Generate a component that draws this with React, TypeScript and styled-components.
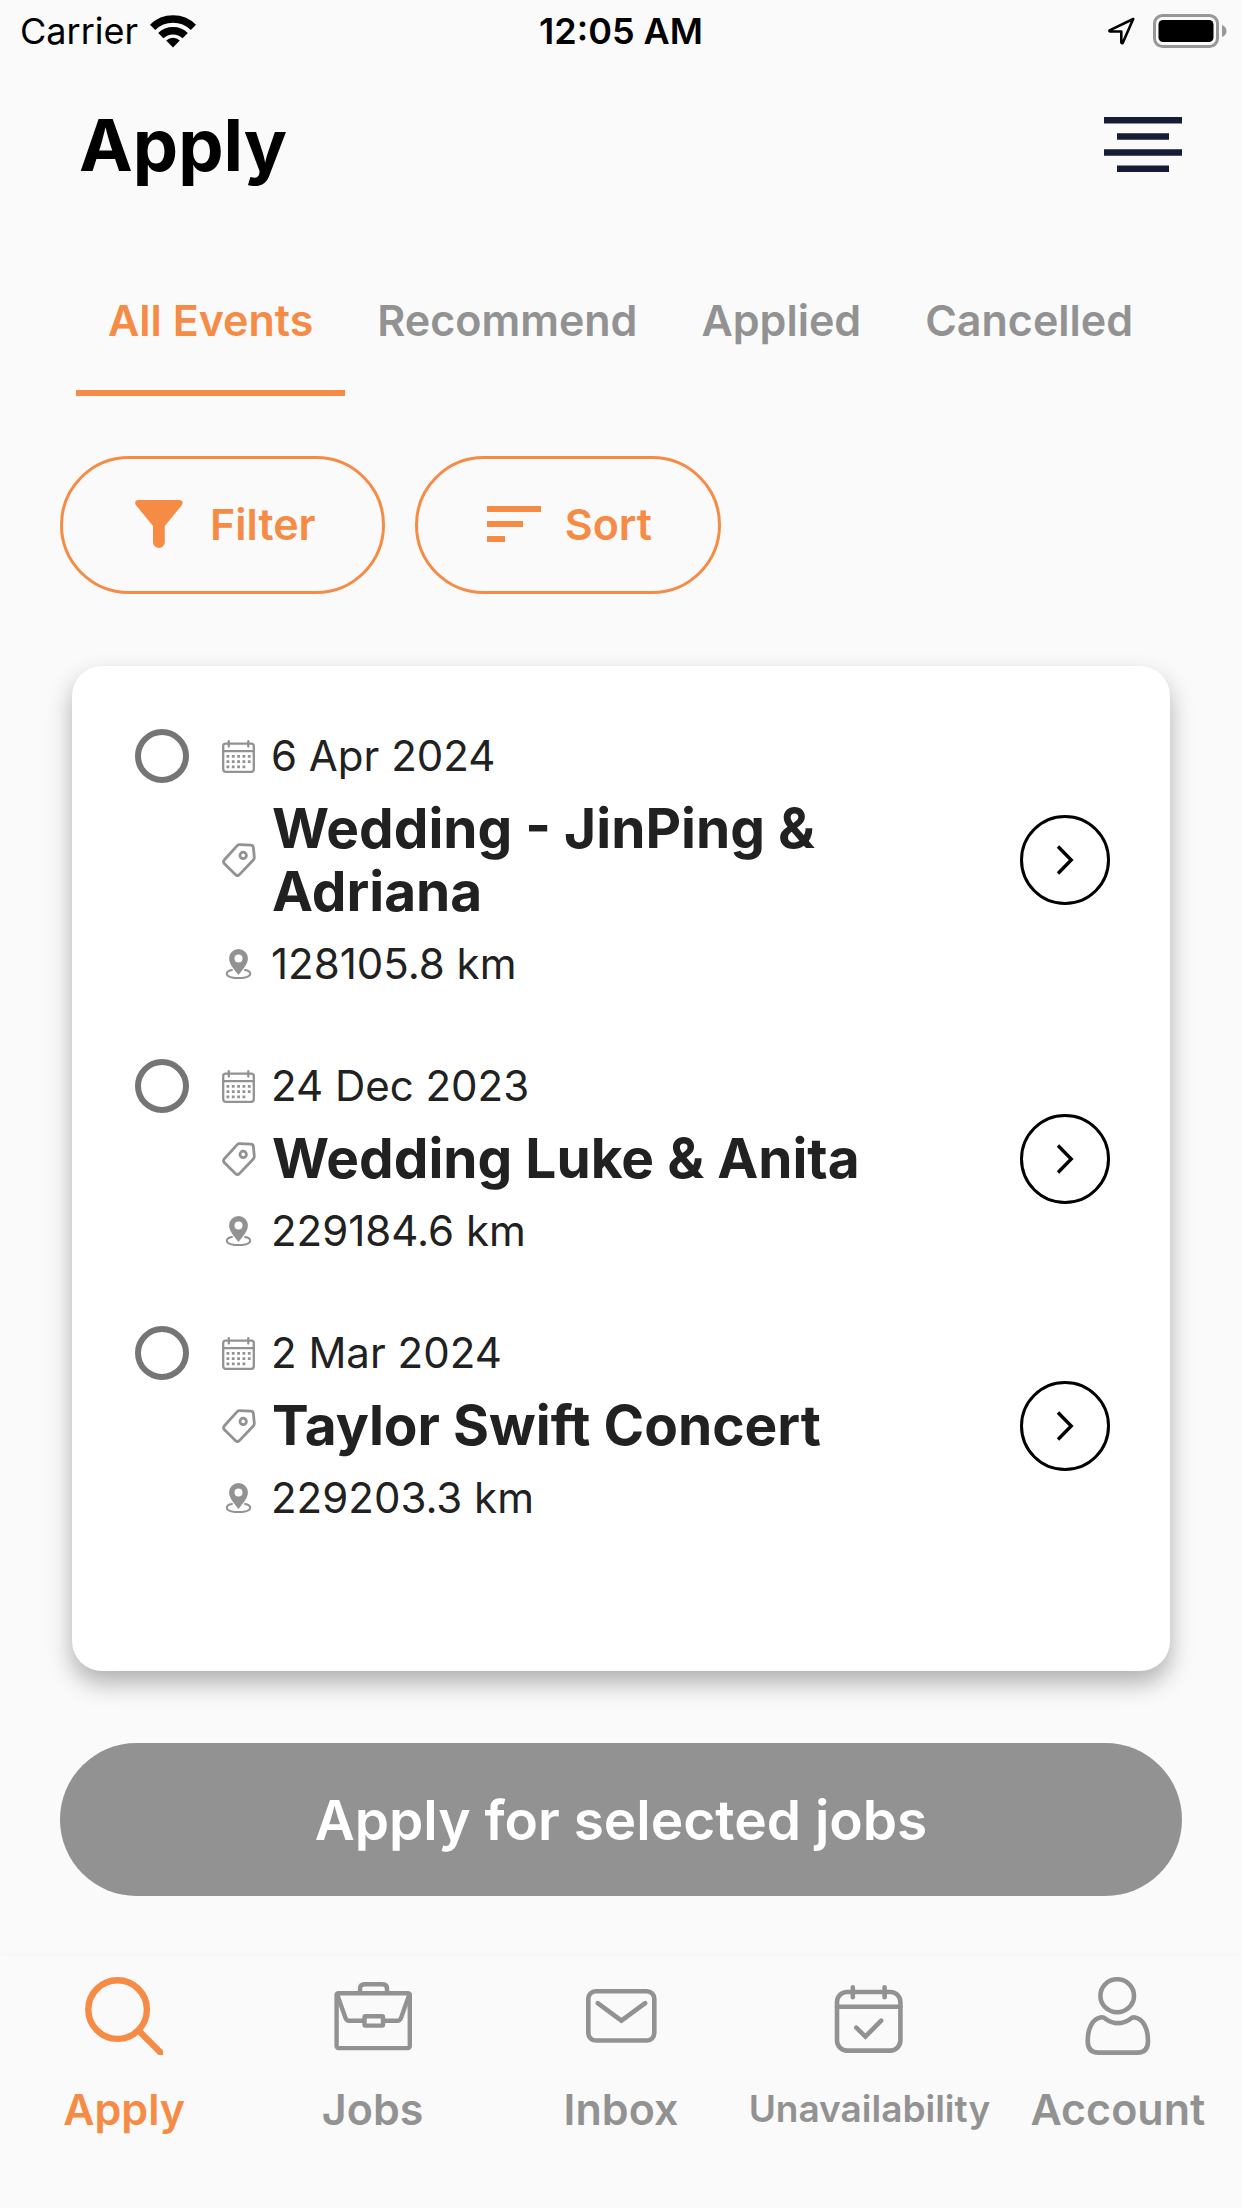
import React, { useState } from "react";
import styled, { createGlobalStyle } from "styled-components";

const color = {
  background: "#fafafa",
  accent: "#f68b45",
  muted: "#929292",
  text: "#212121",
  radio: "#757575",
  menu: "#161c35",
};

const GlobalStyle = createGlobalStyle`
  *, *::before, *::after { box-sizing: border-box; }
  body {
    margin: 0;
    background: ${color.background};
    color: ${color.text};
    font-family: Inter, "Liberation Sans", sans-serif;
  }
  button { font: inherit; color: inherit; background: none; border: 0; padding: 0; cursor: pointer; }
  svg { display: block; flex: none; }
`;

const Screen = styled.div`
  display: flex;
  flex-direction: column;
  min-height: 100vh;
`;

const StatusBar = styled.div`
  display: grid;
  grid-template-columns: 1fr auto 1fr;
  align-items: center;
  height: 62px;
  padding: 0 15px;
  color: #000;
  font-size: 36px;
`;

const StatusGroup = styled.div<{ $end?: boolean }>`
  display: flex;
  align-items: center;
  justify-content: ${(p) => (p.$end ? "flex-end" : "flex-start")};
  gap: ${(p) => (p.$end ? 18 : 12)}px;
  padding-left: 5px;
`;

const Clock = styled.time`
  font-weight: 600;
`;

const Header = styled.header`
  display: flex;
  align-items: center;
  justify-content: space-between;
  height: 166px;
  padding: 0 60px 0 79px;
`;

const PageTitle = styled.h1`
  margin: 0;
  color: #000;
  font-size: 72px;
  font-weight: 700;
  line-height: 84px;
`;

const Tabs = styled.div`
  display: flex;
  margin: 24px 60px 0 76px;
`;

const Tab = styled.button<{ $active: boolean }>`
  height: 144px;
  padding: 0 32px 3px;
  border-bottom: 6px solid ${(p) => (p.$active ? color.accent : "transparent")};
  color: ${(p) => (p.$active ? color.accent : color.muted)};
  font-size: 43px;
  font-weight: 600;
  white-space: nowrap;
`;

const Tools = styled.div`
  display: flex;
  gap: 30px;
  margin: 60px 60px 72px;
`;

const PillButton = styled.button`
  display: flex;
  align-items: center;
  gap: 24px;
  height: 138px;
  padding: 0 66px 2px 69px;
  border: 3px solid ${color.accent};
  border-radius: 69px;
  color: ${color.accent};
  font-size: 43px;
  font-weight: 600;
`;

const Card = styled.ul`
  flex: 1;
  display: flex;
  flex-direction: column;
  gap: 68px;
  margin: 0 72px;
  padding: 63px 60px 63px 63px;
  border-radius: 30px;
  background: #fff;
  box-shadow: 0 12px 24px rgba(0, 0, 0, 0.3);
  list-style: none;
`;

const EventRow = styled.li`
  display: flex;
  align-items: center;
  gap: 33px;
`;

const SelectBox = styled.input`
  appearance: none;
  align-self: flex-start;
  flex: none;
  width: 54px;
  height: 54px;
  margin: 0;
  border: 6px solid ${color.radio};
  border-radius: 50%;
  cursor: pointer;

  &:checked {
    border-color: ${color.accent};
    background: radial-gradient(${color.accent} 50%, transparent 54%);
  }
`;

const Details = styled.label`
  flex: 1;
  display: grid;
  gap: 14px;
`;

const DetailLine = styled.span`
  display: flex;
  align-items: center;
  gap: 16px;
  color: ${color.text};
  font-size: 42px;
  line-height: 54px;

  svg { color: ${color.muted}; }
`;

const EventName = styled.strong`
  font-size: 55px;
  font-weight: 700;
  line-height: 63px;
`;

const OpenButton = styled.button`
  display: grid;
  place-items: center;
  flex: none;
  width: 90px;
  height: 90px;
  border: 3px solid #000;
  border-radius: 50%;
  color: #000;
`;

const ApplyButton = styled.button`
  height: 153px;
  margin: 72px 60px 60px;
  border-radius: 77px;
  background: ${color.muted};
  color: #fff;
  font-size: 55px;
  font-weight: 600;
`;

const BottomNav = styled.nav`
  display: grid;
  grid-template-columns: repeat(5, minmax(0, 1fr));
  padding: 21px 0 72px;
  background: ${color.background};
  box-shadow: 0 -1px 6px rgba(0, 0, 0, 0.025);
`;

const NavLink = styled.a<{ $active: boolean }>`
  display: flex;
  flex-direction: column;
  align-items: center;
  gap: 27px;
  color: ${(p) => (p.$active ? color.accent : color.muted)};
  text-decoration: none;
`;

const NavLabel = styled.span<{ $small: boolean }>`
  font-size: ${(p) => (p.$small ? 37 : 43)}px;
  font-weight: 600;
  line-height: 54px;
  white-space: nowrap;
`;

const line = { fill: "none", stroke: "currentColor", strokeLinecap: "round", strokeLinejoin: "round" } as const;

const WifiIcon = () => (
  <svg width="46" height="34" viewBox="0 0 46 34" fill="none" stroke="currentColor" strokeWidth="7.5" aria-hidden="true">
    <path d="M2.6 13.4A29 29 0 0 1 43.4 13.4" />
    <path d="M10.8 21.6A17.6 17.6 0 0 1 35.2 21.6" />
    <path d="M23 33.5L16.2 26.4A10 10 0 0 1 29.8 26.4Z" fill="currentColor" stroke="none" />
  </svg>
);

const LocationIcon = () => (
  <svg width="27" height="28" viewBox="0 0 27 28" {...line} strokeWidth="2.6" aria-hidden="true">
    <path d="M25.2 2L1.6 13.4Q1 14.4 2 14.5H13.3V25.2Q13.6 26.6 14.8 25.8Z" />
  </svg>
);

const BatteryIcon = () => (
  <svg width="74" height="34" viewBox="0 0 74 34" aria-hidden="true">
    <rect x="1.5" y="1.5" width="63" height="31" rx="8" fill="none" stroke="#979797" strokeWidth="3" />
    <rect x="5.5" y="6" width="55" height="22" rx="4.5" fill="#000" />
    <path d="M69 11Q73.5 13 73.5 17T69 23Z" fill="#979797" />
  </svg>
);

const MenuIcon = () => (
  <svg width="78" height="56" viewBox="0 0 78 56" fill={color.menu} aria-hidden="true">
    <path d="M0 0H78V6.5H0ZM13 16.3H65V22.8H13ZM0 32.3H78V38.8H0ZM13 48.5H65V55H13Z" />
  </svg>
);

const FilterIcon = () => (
  <svg width="54" height="48" viewBox="0 0 54 48" fill="currentColor" aria-hidden="true">
    <path d="M5.5 0H48.2Q52 1 50 5L32.8 26V42.2A5.9 5.8 0 0 1 21 42.2V26L3.8 5Q1.8 1 5.5 0Z" />
  </svg>
);

const SortIcon = () => (
  <svg width="54" height="36" viewBox="0 0 54 36" fill="currentColor" aria-hidden="true">
    <path d="M0 0H54V6H0ZM0 15H36V21H0ZM0 30H18V36H0Z" />
  </svg>
);

const DateIcon = () => (
  <svg width="33" height="33" viewBox="0 0 33 33" aria-hidden="true">
    <g {...line} strokeWidth="2.3">
      <rect x="1.2" y="3.6" width="30.6" height="28.2" rx="2.5" />
      <path d="M1 11.2H32M6.8 1.2V6.5M26.3 1.2V6.5" />
    </g>
    <g {...line} strokeLinecap="butt" strokeWidth="2.8" strokeDasharray="2.8 2.53">
      <path d="M4.5 16.4H28.7M4.5 21.7H28.7M4.5 26.9H23.3" />
    </g>
  </svg>
);

const TagIcon = () => (
  <svg width="34" height="34" viewBox="0 0 34 34" {...line} strokeWidth="2.8" aria-hidden="true">
    <path d="M17.6 1.6L28.8 2.2Q31.2 2.4 31.4 4.6L32.3 14.2Q32.4 15.8 31.3 17L17.4 31.6Q15.4 33.4 13.4 31.6L2.2 20.6Q.8 18.8 2.2 17L15.2 2.6Q16.2 1.5 17.6 1.6Z" />
    <circle cx="21.2" cy="12.4" r="3.2" />
  </svg>
);

const PlaceIcon = () => (
  <svg width="33" height="33" viewBox="0 0 33 33" aria-hidden="true">
    <path
      fill="currentColor"
      fillRule="evenodd"
      d="M16.5 1A9.4 9.4 0 0 1 25.9 10.4C25.9 16.5 20 22 16.5 27C13 22 7.1 16.5 7.1 10.4A9.4 9.4 0 0 1 16.5 1ZM16.5 6.5A4 4 0 1 0 16.5 14.5A4 4 0 1 0 16.5 6.5Z"
    />
    <path {...line} strokeWidth="2" d="M10 22C3.4 23 3 27.6 9 29.2Q16.5 31 24 29.2C30 27.6 29.6 23 23 22" />
  </svg>
);

const ChevronIcon = () => (
  <svg width="24" height="30" viewBox="0 0 24 30" fill="none" stroke="currentColor" strokeWidth="3.4" aria-hidden="true">
    <path d="M5 1.5L18.2 15L5 28.5" />
  </svg>
);

const NavIcon = ({ children }: { children: React.ReactNode }) => (
  <svg width="78" height="78" viewBox="0 0 78 78" {...line} strokeWidth="4.6" aria-hidden="true">
    {children}
  </svg>
);

const SearchIcon = () => (
  <NavIcon>
    <g strokeWidth="6.4" strokeLinecap="butt">
      <circle cx="32.6" cy="32.6" r="29.3" />
      <path d="M53.5 53.5L80 80" />
    </g>
  </NavIcon>
);

const JobsIcon = () => (
  <NavIcon>
    <g strokeWidth="4.4">
      <rect x="2.6" y="16.3" width="73.2" height="54.8" rx="2" />
      <path d="M26 15V11.8Q26 7.3 30.5 7.3H48.5Q53 7.3 53 11.8V15" />
      <path d="M3 17L11.5 41Q12.5 43.7 15 43.7H29M50 43.7H63.5Q66 43.7 67 41L75.5 17" />
      <rect x="30.5" y="39.2" width="18.5" height="9.4" rx="1" />
    </g>
  </NavIcon>
);

const InboxIcon = () => (
  <NavIcon>
    <rect x="6.3" y="14.3" width="66" height="49.2" rx="7.5" />
    <path strokeLinejoin="miter" d="M15.7 26.1L39.4 43.6L63.2 26.1" />
  </NavIcon>
);

const UnavailabilityIcon = () => (
  <NavIcon>
    <rect x="7" y="15" width="63.4" height="58.6" rx="10" />
    <path strokeLinejoin="miter" d="M7 29.7H70.4M22.8 10.4V20.2M54.6 10.4V20.2M26.3 50.6L35.4 59.6L51.2 43.6" />
  </NavIcon>
);

const AccountIcon = () => (
  <NavIcon>
    <ellipse cx="38.2" cy="18.8" rx="16.8" ry="16.5" />
    <path d="M22.5 40.2C13 41.5 8.7 52 8.7 64Q8.7 75.6 19.5 75.6H58.5Q69 75.6 69 64C69 52 64.5 41.5 55 40.2Q53 40.2 51.5 41.8Q38.8 50.5 26.5 41.8Q24.5 40 22.5 40.2Z" />
  </NavIcon>
);

const tabs = ["All Events", "Recommend", "Applied", "Cancelled"];

const events = [
  { id: "jinping", date: "6 Apr 2024", name: "Wedding - JinPing & Adriana", distance: "128105.8 km" },
  { id: "luke", date: "24 Dec 2023", name: "Wedding Luke & Anita", distance: "229184.6 km" },
  { id: "taylor", date: "2 Mar 2024", name: "Taylor Swift Concert", distance: "229203.3 km" },
];

const destinations = [
  { label: "Apply", Icon: SearchIcon },
  { label: "Jobs", Icon: JobsIcon },
  { label: "Inbox", Icon: InboxIcon },
  { label: "Unavailability", Icon: UnavailabilityIcon },
  { label: "Account", Icon: AccountIcon },
];

export default function App() {
  const [activeTab, setActiveTab] = useState(tabs[0]);

  return (
    <Screen>
      <GlobalStyle />
      <StatusBar>
        <StatusGroup>
          <span>Carrier</span>
          <WifiIcon />
        </StatusGroup>
        <Clock>12:05 AM</Clock>
        <StatusGroup $end>
          <LocationIcon />
          <BatteryIcon />
        </StatusGroup>
      </StatusBar>

      <Header>
        <PageTitle>Apply</PageTitle>
        <button type="button" aria-label="Menu">
          <MenuIcon />
        </button>
      </Header>

      <Tabs role="tablist">
        {tabs.map((tab) => (
          <Tab
            key={tab}
            type="button"
            role="tab"
            aria-selected={tab === activeTab}
            $active={tab === activeTab}
            onClick={() => setActiveTab(tab)}
          >
            {tab}
          </Tab>
        ))}
      </Tabs>

      <Tools>
        <PillButton type="button">
          <FilterIcon />
          Filter
        </PillButton>
        <PillButton type="button">
          <SortIcon />
          Sort
        </PillButton>
      </Tools>

      <Card>
        {events.map((event) => (
          <EventRow key={event.id}>
            <SelectBox type="checkbox" id={event.id} />
            <Details htmlFor={event.id}>
              <DetailLine>
                <DateIcon />
                {event.date}
              </DetailLine>
              <DetailLine>
                <TagIcon />
                <EventName>{event.name}</EventName>
              </DetailLine>
              <DetailLine>
                <PlaceIcon />
                {event.distance}
              </DetailLine>
            </Details>
            <OpenButton type="button" aria-label={`Open ${event.name}`}>
              <ChevronIcon />
            </OpenButton>
          </EventRow>
        ))}
      </Card>

      <ApplyButton type="button">Apply for selected jobs</ApplyButton>

      <BottomNav>
        {destinations.map(({ label, Icon }, index) => (
          <NavLink key={label} href={`#${label.toLowerCase()}`} $active={index === 0}>
            <Icon />
            <NavLabel $small={label.length > 10}>{label}</NavLabel>
          </NavLink>
        ))}
      </BottomNav>
    </Screen>
  );
}
